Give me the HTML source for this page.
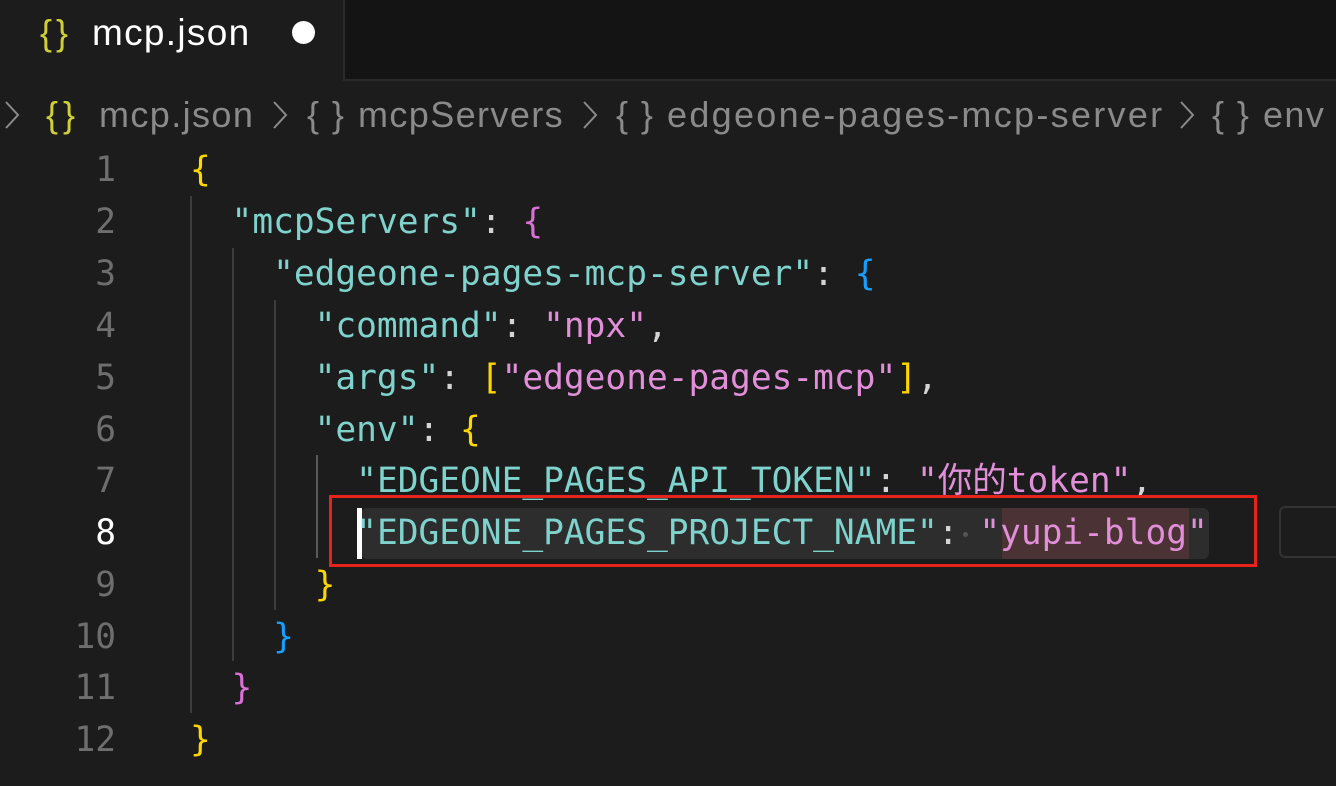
<!DOCTYPE html>
<html><head><meta charset="utf-8"><style>
body{margin:0;width:1336px;height:786px;background:#1c1c1c;overflow:hidden;position:relative;font-family:"DejaVu Sans Mono","Liberation Mono","Noto Sans CJK SC",monospace}
.abs{position:absolute}
.tabr{left:343px;top:0;width:993px;height:79px;background:#141414;border-left:2px solid #2a2a2a;border-bottom:2px solid #2a2a2a}
.ui{font-family:"Liberation Sans","DejaVu Sans",sans-serif}
.bc{position:absolute;top:92px;font-family:"Liberation Sans","DejaVu Sans",sans-serif;font-size:36px;line-height:46px;color:#8a8a8a;letter-spacing:1.4px;white-space:pre}
.ch{position:absolute;top:100px;width:16px;height:30px}
.ln{position:absolute;left:0;width:116px;text-align:right;color:#6e6e6e;font-size:34.5px;line-height:52px;height:52px}
.cd{position:absolute;left:190px;font-size:34.5px;line-height:52px;height:52px;white-space:pre;color:#d4d4d4}
.k{color:#7fd3cc}.s{color:#e08fd8}.y{color:#ffd700}.p{color:#da70d6}.b{color:#179fff}
.g{position:absolute;width:2px;background:#3c3c3c}
</style></head><body>
<div class="abs tabr"></div>
<div class="abs ui" style="left:40px;top:10px;font-size:36px;line-height:46px;color:#cfcf3a;letter-spacing:4px">{}</div>
<div class="abs ui" style="left:92px;top:10px;font-size:37px;line-height:46px;color:#fff;letter-spacing:1.3px">mcp.json</div>
<div class="abs" style="left:292px;top:21px;width:23px;height:23px;border-radius:50%;background:#fff"></div>

<svg class="ch" style="left:4px" viewBox="0 0 16 30"><path d="M2 2 L14 15 L2 28" fill="none" stroke="#8a8a8a" stroke-width="2"/></svg>
<div class="bc" style="left:46px;color:#cfcf3a;letter-spacing:5px">{}</div>
<div class="bc" style="left:99px">mcp.json</div>
<svg class="ch" style="left:272px" viewBox="0 0 16 30"><path d="M2 2 L14 15 L2 28" fill="none" stroke="#8a8a8a" stroke-width="2"/></svg>
<div class="bc" style="left:307px">{ }</div>
<div class="bc" style="left:358px">mcpServers</div>
<svg class="ch" style="left:582px" viewBox="0 0 16 30"><path d="M2 2 L14 15 L2 28" fill="none" stroke="#8a8a8a" stroke-width="2"/></svg>
<div class="bc" style="left:616px">{ }</div>
<div class="bc" style="left:667px;letter-spacing:2.3px">edgeone-pages-mcp-server</div>
<svg class="ch" style="left:1179px" viewBox="0 0 16 30"><path d="M2 2 L14 15 L2 28" fill="none" stroke="#8a8a8a" stroke-width="2"/></svg>
<div class="bc" style="left:1212px">{ }</div>
<div class="bc" style="left:1263px">env</div>

<div class="g" style="left:190px;top:196px;height:517px"></div>
<div class="g" style="left:232px;top:248px;height:413px"></div>
<div class="g" style="left:274px;top:300px;height:310px"></div>
<div class="g" style="left:316px;top:455px;height:103px;background:#5a5a5a"></div>

<div class="abs" style="left:361px;top:508px;width:848px;height:51px;background:#2d2d2d;border-radius:6px"></div>
<div class="abs" style="left:1002px;top:508px;width:187px;height:51px;background:#4b3234"></div>
<div class="abs" style="left:357px;top:508px;width:5px;height:51px;background:#fff"></div>
<div class="abs" style="left:963px;top:532px;width:5px;height:5px;border-radius:50%;background:#555"></div>
<div class="abs" style="left:1279px;top:506px;width:70px;height:52px;border:2px solid #333;border-radius:6px;box-sizing:border-box"></div>

<div class="ln" style="top:144px">1</div><div class="cd" style="top:144px"><span class="y">{</span></div>
<div class="ln" style="top:196px">2</div><div class="cd" style="top:196px">  <span class="k">"mcpServers"</span>: <span class="p">{</span></div>
<div class="ln" style="top:248px">3</div><div class="cd" style="top:248px">    <span class="k">"edgeone-pages-mcp-server"</span>: <span class="b">{</span></div>
<div class="ln" style="top:300px">4</div><div class="cd" style="top:300px">      <span class="k">"command"</span>: <span class="s">"npx"</span>,</div>
<div class="ln" style="top:352px">5</div><div class="cd" style="top:352px">      <span class="k">"args"</span>: <span class="y">[</span><span class="s">"edgeone-pages-mcp"</span><span class="y">]</span>,</div>
<div class="ln" style="top:404px">6</div><div class="cd" style="top:404px">      <span class="k">"env"</span>: <span class="y">{</span></div>
<div class="ln" style="top:455px">7</div><div class="cd" style="top:455px">        <span class="k">"EDGEONE_PAGES_API_TOKEN"</span>: <span class="s">"你的token"</span>,</div>
<div class="ln" style="top:507px;color:#fff">8</div><div class="cd" style="top:507px">        <span class="k">"EDGEONE_PAGES_PROJECT_NAME"</span>: <span class="s">"yupi-blog"</span></div>
<div class="ln" style="top:559px">9</div><div class="cd" style="top:559px">      <span class="y">}</span></div>
<div class="ln" style="top:611px">10</div><div class="cd" style="top:611px">    <span class="b">}</span></div>
<div class="ln" style="top:662px">11</div><div class="cd" style="top:662px">  <span class="p">}</span></div>
<div class="ln" style="top:714px">12</div><div class="cd" style="top:714px"><span class="y">}</span></div>

<div class="abs" style="left:329px;top:495px;width:928px;height:72px;border:3px solid #e8231c;box-sizing:border-box"></div>
</body></html>
